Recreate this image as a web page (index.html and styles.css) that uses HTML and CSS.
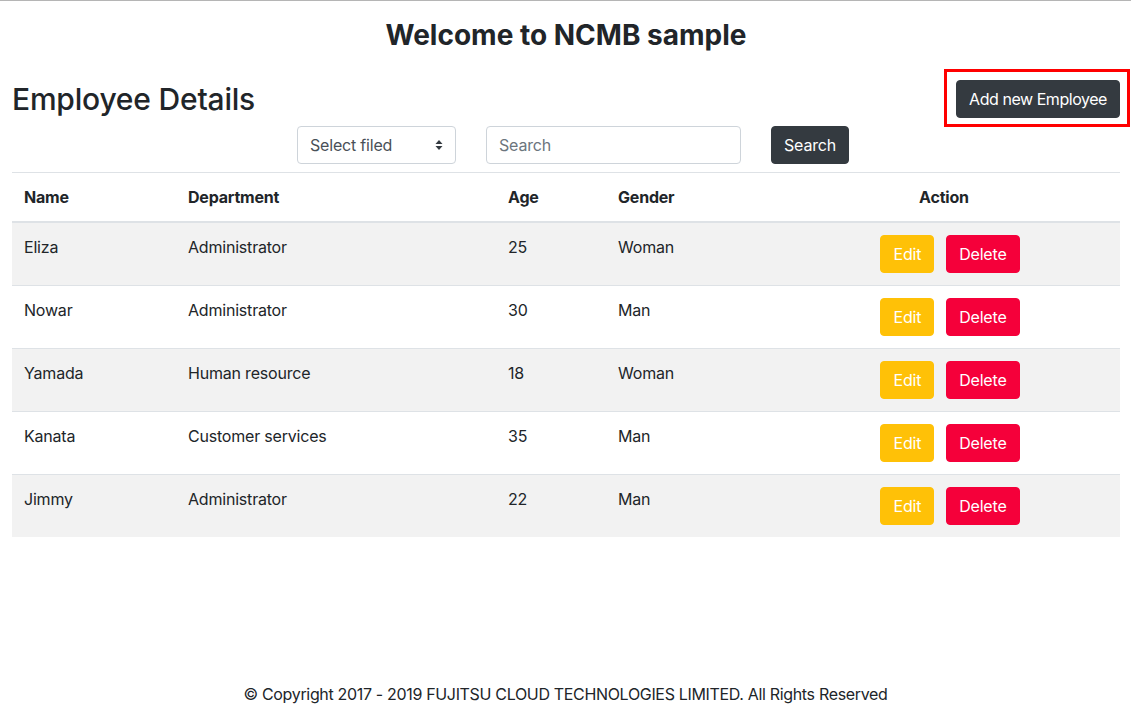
FILE: index.html
```html
<!DOCTYPE html>
<html>
<head>
<meta charset="utf-8">
<link rel="stylesheet" href="styles.css">
</head>
<body>
<main class="container">
  <h1 class="title">Welcome to NCMB sample</h1>
  <div class="head-row">
    <h2 class="subtitle">Employee Details</h2>
    <div class="highlight">
      <button class="btn btn-dark btn-add">Add new Employee</button>
    </div>
  </div>
  <div class="search-row">
    <div class="select-wrap">
      <select class="select">
        <option>Select filed</option>
      </select>
      <svg class="select-arrow" width="8" height="10" viewBox="0 0 8 10"><path d="M4 0 L7.5 4 H0.5 Z M4 10 L7.5 6 H0.5 Z" fill="#343a40"/></svg>
    </div>
    <input class="input" type="text" placeholder="Search">
    <button class="btn btn-dark">Search</button>
  </div>
  <table class="table">
    <thead>
      <tr>
        <th class="c-name">Name</th>
        <th class="c-dept">Department</th>
        <th class="c-age">Age</th>
        <th class="c-gender">Gender</th>
        <th class="c-action">Action</th>
      </tr>
    </thead>
    <tbody>
      <tr><td>Eliza</td><td>Administrator</td><td>25</td><td>Woman</td><td><div class="actions"><button class="btn btn-edit">Edit</button><button class="btn btn-delete">Delete</button></div></td></tr>
      <tr><td>Nowar</td><td>Administrator</td><td>30</td><td>Man</td><td><div class="actions"><button class="btn btn-edit">Edit</button><button class="btn btn-delete">Delete</button></div></td></tr>
      <tr><td>Yamada</td><td>Human resource</td><td>18</td><td>Woman</td><td><div class="actions"><button class="btn btn-edit">Edit</button><button class="btn btn-delete">Delete</button></div></td></tr>
      <tr><td>Kanata</td><td>Customer services</td><td>35</td><td>Man</td><td><div class="actions"><button class="btn btn-edit">Edit</button><button class="btn btn-delete">Delete</button></div></td></tr>
      <tr><td>Jimmy</td><td>Administrator</td><td>22</td><td>Man</td><td><div class="actions"><button class="btn btn-edit">Edit</button><button class="btn btn-delete">Delete</button></div></td></tr>
    </tbody>
  </table>
</main>
<footer class="footer">© Copyright 2017 - 2019 FUJITSU CLOUD TECHNOLOGIES LIMITED. All Rights Reserved</footer>
</body>
</html>
```
FILE: styles.css
```css
* { box-sizing: border-box; }
html, body { margin: 0; padding: 0; }
body {
  font-family: Inter, "Noto Sans", "Liberation Sans", sans-serif;
  font-size: 16px;
  line-height: 24px;
  color: #212529;
  background: #fff;
  border-top: 1px solid #b5b5b5;
  min-height: 722px;
  display: flex;
  flex-direction: column;
}
.container {
  padding: 0 11px 0 12px;
}
.title {
  margin: 17px 0 0;
  font-size: 28px;
  line-height: 34px;
  font-weight: 700;
  text-align: center;
  letter-spacing: 0;
}
.head-row {
  display: flex;
  justify-content: space-between;
  align-items: center;
  margin-top: 17px;
}
.subtitle {
  margin: 0;
  padding-top: 2px;
  font-size: 30px;
  line-height: 38px;
  font-weight: 500;
  letter-spacing: -0.2px;
}
.highlight {
  border: 3px solid #ff0000;
  padding: 8px 7px 6px 9px;
  margin-right: -10px;
}
.btn {
  display: inline-block;
  font-family: inherit;
  font-size: 16px;
  line-height: 24px;
  padding: 6px 12px;
  border: 1px solid transparent;
  border-radius: 4px;
  color: #fff;
  cursor: pointer;
  letter-spacing: -0.2px;
}
.btn-add { letter-spacing: -0.45px; }
.btn-dark {
  background: #343a40;
  border-color: #343a40;
}
.search-row {
  display: flex;
  justify-content: center;
  gap: 30px;
  margin-top: -1px;
  padding-left: 14px;
}
.select-wrap {
  position: relative;
  width: 159px;
}
.select {
  width: 159px;
  height: 38px;
  appearance: none;
  -webkit-appearance: none;
  border: 1px solid #ced4da;
  border-radius: 4px;
  background: #fff;
  padding: 6px 24px 6px 12px;
  font-family: inherit;
  font-size: 16px;
  color: #495057;
  letter-spacing: -0.2px;
}
.select-arrow {
  position: absolute;
  right: 13px;
  top: 14px;
  pointer-events: none;
}
.input {
  width: 255px;
  height: 38px;
  border: 1px solid #ced4da;
  border-radius: 4px;
  padding: 6px 12px;
  font-family: inherit;
  font-size: 16px;
  color: #495057;
  letter-spacing: -0.2px;
}
.input::placeholder { color: #6c757d; }
.table {
  width: 100%;
  margin-top: 8px;
  border-collapse: collapse;
  table-layout: fixed;
}
.table th, .table td {
  padding: 12px;
  text-align: left;
  vertical-align: top;
  border-top: 1px solid #dee2e6;
  letter-spacing: -0.2px;
}
.table th {
  font-weight: 700;
  border-bottom: 2px solid #dee2e6;
}
.c-name { width: 164px; }
.c-dept { width: 320px; }
.c-age { width: 110px; }
.c-gender { width: 162px; }
.table th.c-action { text-align: center; }
.table tbody tr:nth-child(odd) td { background: #f2f2f2; }
.actions {
  display: flex;
  justify-content: center;
  gap: 12px;
  padding-left: 12px;
}
.btn-edit { background: #ffc107; border-color: #ffc107; }
.btn-delete { background: #f5003a; border-color: #f5003a; }
.footer {
  margin-top: auto;
  text-align: center;
  padding-bottom: 16px;
  letter-spacing: -0.33px;
}
```
